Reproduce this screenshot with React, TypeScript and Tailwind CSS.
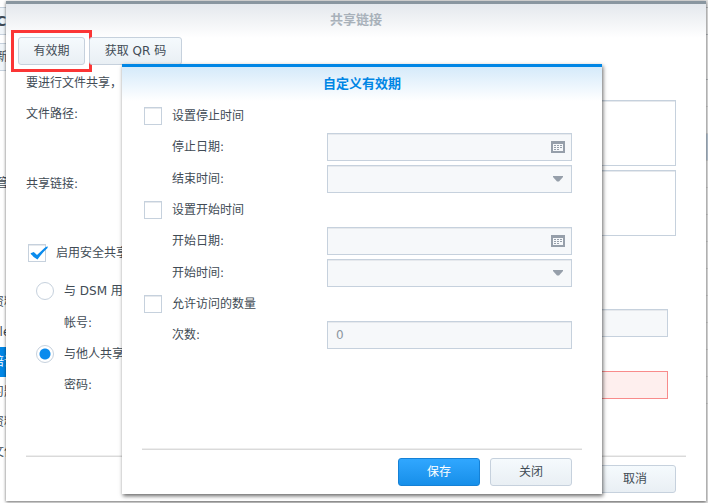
import { useState } from "react";
import type { ReactNode } from "react";

interface FolderRow {
  label: string;
  selected?: boolean;
}

const folders: FolderRow[] = [
  { label: "资料" },
  { label: "file" },
  { label: "培训", selected: true },
  { label: "习题" },
  { label: "资料" },
  { label: "文件" },
];

// rows of the file list, top to bottom; true marks the highlighted one
const listRows = [false, false, true, false, false, false, false, false, false, false, false, false];

const insetLine = "shadow-[inset_0_1px_0_#e6e9ed]";
const fieldBase = `block h-7 w-full border border-[#c6d1dd] bg-[#f6f8fa] px-2 text-[#8c969f] outline-none ${insetLine}`;
const buttonBase = "h-7 cursor-pointer rounded-[3px] border px-3";
const plainButton = `${buttonBase} border-[#c6d1dd] bg-linear-to-b from-[#f5fafd] to-[#e9eff4]`;
const footerLine = "border-t border-[#dadada] shadow-[0_-1px_0_#eeeeee]";

function CalendarIcon() {
  return (
    <svg width="14" height="12" viewBox="0 0 14 12" shapeRendering="crispEdges" aria-hidden="true">
      <rect width="14" height="12" rx="1" fill="#969faa" />
      <path d="M2 3h10v7H2z" fill="#f6f8fa" />
      <path d="M3 4h2v1H3zM6 4h2v1H6zM9 4h2v1H9zM3 6h2v1H3zM6 6h2v1H6zM9 6h2v1H9zM3 8h2v1H3zM6 8h2v1H6z" fill="#969faa" />
    </svg>
  );
}

function ArrowIcon() {
  return (
    <svg width="10" height="6" viewBox="0 0 10 6" aria-hidden="true">
      <path d="M0 0h10v1L6 5.500H4L0 1z" fill="#969faa" />
    </svg>
  );
}

function TickBox({ id, defaultChecked, label }: { id: string; defaultChecked?: boolean; label: string }) {
  return (
    <div className="flex h-[30px] items-center gap-[10px]">
      <span className="relative flex h-[18px] w-[18px] shrink-0">
        <input
          id={id}
          type="checkbox"
          defaultChecked={defaultChecked}
          className={`peer h-[18px] w-[18px] appearance-none border border-[#c6d1dd] bg-white ${insetLine}`}
        />
        <svg
          width="20"
          height="18"
          viewBox="0 0 20 18"
          className="pointer-events-none absolute top-0 left-px hidden peer-checked:block"
          aria-hidden="true"
        >
          <path d="M1.500 9.200L4.800 8L8 11L15.500 4Q17.500 2 18.800 2.500L18.500 4Q13 9 8.500 15.500Q4 13.500 1.500 9.200z" fill="#0a8bed" />
        </svg>
      </span>
      <label htmlFor={id}>{label}</label>
    </div>
  );
}

function Choice({ id, label, checked, onChange }: { id: string; label: string; checked: boolean; onChange: () => void }) {
  return (
    <div className="flex h-8 items-center gap-[10px] pl-2">
      <input
        id={id}
        type="radio"
        name="audience"
        checked={checked}
        onChange={onChange}
        className="h-[18px] w-[18px] shrink-0 appearance-none rounded-full border border-[#c6d1dd] bg-white checked:bg-[radial-gradient(circle,#0a8bed_5px,#fff_6px)]"
      />
      <label htmlFor={id}>{label}</label>
    </div>
  );
}

function FormRow({ id, label, icon, children }: { id: string; label: string; icon?: ReactNode; children: ReactNode }) {
  return (
    <div className="flex h-8 items-center pl-7">
      <label htmlFor={id} className="w-[155px] shrink-0">
        {label}
      </label>
      <div className="relative flex-1">
        {children}
        {icon && <span className="pointer-events-none absolute inset-y-0 right-0 flex w-7 items-center justify-center">{icon}</span>}
      </div>
    </div>
  );
}

function ValidityDialog() {
  return (
    <section
      role="dialog"
      aria-labelledby="validity-title"
      className="absolute top-[60px] bottom-[7px] left-[116px] flex w-[480px] flex-col border-t-[3px] border-[#0086e5] bg-white bg-linear-to-b from-[#d5eafa] to-white to-[34px] px-5 pb-2 shadow-[1px_2px_4px_rgba(0,0,0,0.6)]"
    >
      <h2 id="validity-title" className="h-[34px] text-center text-[13px] leading-[34px] font-bold text-[#0086e5]">
        自定义有效期
      </h2>
      <form className="flex flex-1 flex-col pr-[10px] pl-[2px]">
        <TickBox id="set-stop" label="设置停止时间" />
        <FormRow id="stop-date" label="停止日期:" icon={<CalendarIcon />}>
          <input id="stop-date" type="text" className={fieldBase} />
        </FormRow>
        <FormRow id="stop-time" label="结束时间:" icon={<ArrowIcon />}>
          <select id="stop-time" className={`${fieldBase} appearance-none`} />
        </FormRow>
        <TickBox id="set-start" label="设置开始时间" />
        <FormRow id="start-date" label="开始日期:" icon={<CalendarIcon />}>
          <input id="start-date" type="text" className={fieldBase} />
        </FormRow>
        <FormRow id="start-time" label="开始时间:" icon={<ArrowIcon />}>
          <select id="start-time" className={`${fieldBase} appearance-none`} />
        </FormRow>
        <TickBox id="set-count" label="允许访问的数量" />
        <FormRow id="count" label="次数:">
          <input id="count" type="text" defaultValue="0" className={fieldBase} />
        </FormRow>
      </form>
      <footer className={`flex justify-end gap-[10px] pt-2 pr-[10px] ${footerLine}`}>
        <button type="button" className={`${buttonBase} w-[82px] border-[#1581d6] bg-linear-to-b from-[#30a7ff] to-[#168fe9] text-white`}>
          保存
        </button>
        <button type="button" className={`${plainButton} w-[82px]`}>
          关闭
        </button>
      </footer>
    </section>
  );
}

function FileBrowser() {
  return (
    <div className="flex h-screen overflow-hidden bg-white whitespace-nowrap">
      <nav className="w-40 pt-[7px]">
        <div className="h-7 border-y border-[#c6d1dd] bg-[#f0f5f9] -indent-1 text-sm leading-[26px] font-bold">C</div>
        <div className="mt-2 h-7 border-y border-[#c6d1dd] bg-[#f0f5f9] -indent-1 leading-[26px]">新增</div>
        <div className="pt-[97px] pb-[89px] -indent-1 leading-[30px]">管理</div>
        <ul className="-indent-2">
          {folders.map((folder, idx) => (
            <li key={idx} className={folder.selected ? "h-[30px] bg-[#0086e5] leading-[30px] text-white" : "h-[30px] leading-[30px]"}>
              {folder.label}
            </li>
          ))}
        </ul>
      </nav>
      <div className="flex-1 bg-[#e4e4e4] pt-[7px]">
        <div className="h-7 border-y border-[#b4b8bc]" />
        <div className="h-[45px] border-b border-[#b4b8bc]" />
        {listRows.map((active, idx) => (
          <div key={idx} className={active ? "h-[27px] border-b border-[#cfcfcf] bg-[#b9c8d6]" : "h-[27px] border-b border-[#cfcfcf]"} />
        ))}
      </div>
    </div>
  );
}

export default function App() {
  const [audience, setAudience] = useState("others");

  return (
    <div className="relative h-screen min-h-[503px] overflow-hidden bg-[#dedede] font-['DejaVu_Sans','Noto_Sans_CJK_SC',sans-serif] text-xs text-[#414b55]">
      <FileBrowser />

      <main className="absolute top-px right-[2px] bottom-[2px] left-[6px] flex flex-col border-t-[3px] border-[#8996a0] bg-white bg-linear-to-b from-[#e4e8ed] to-white to-[34px] px-5 shadow-[0_1px_3px_rgba(0,0,0,0.6)]">
        <h1 className="h-[33px] text-center text-[13px] leading-8 font-bold text-[#a8b1ba]">共享链接</h1>
        <div className="-ml-2 flex h-7 gap-1">
          <div className="outline-3 outline-offset-4 outline-[#fb3535]">
            <button type="button" className={`${plainButton} w-[67px]`}>
              有效期
            </button>
          </div>
          <button type="button" className={`${plainButton} w-[93px]`}>
            获取 QR 码
          </button>
        </div>

        <p className="pt-2 leading-5">要进行文件共享，请将以下链接发送给收件人。</p>

        <div className="flex pt-[7px] pr-[10px]">
          <label htmlFor="path" className="w-[200px] shrink-0 leading-7">
            文件路径:
          </label>
          <textarea id="path" className={`h-[66px] flex-1 resize-none border border-[#c6d1dd] ${insetLine}`} />
        </div>
        <div className="flex pt-1 pr-[10px]">
          <label htmlFor="link" className="w-[200px] shrink-0 leading-7">
            共享链接:
          </label>
          <textarea id="link" className={`h-[66px] flex-1 resize-none border border-[#c6d1dd] ${insetLine}`} />
        </div>

        <div className="flex flex-1 flex-col pt-[2px] pr-[18px] pl-[2px]">
          <TickBox id="secure" defaultChecked label="启用安全共享" />
          <div className="pt-[7px]">
            <Choice id="dsm" label="与 DSM 用户共享" checked={audience === "dsm"} onChange={() => setAudience("dsm")} />
            <div className="flex h-[31px] items-center pl-9">
              <label htmlFor="account" className="w-[170px] shrink-0">
                帐号:
              </label>
              <input id="account" type="text" className={fieldBase} />
            </div>
            <Choice id="others" label="与他人共享" checked={audience === "others"} onChange={() => setAudience("others")} />
            <div className="flex h-[30px] items-center pl-9">
              <label htmlFor="password" className="w-[170px] shrink-0">
                密码:
              </label>
              <input id="password" type="password" className="h-7 w-full border border-[#f88b8b] bg-[#feefee] px-2 outline-none" />
            </div>
          </div>
        </div>

        <footer className={`flex justify-end pt-2 pr-[10px] pb-2 ${footerLine}`}>
          <button type="button" className={`${plainButton} w-[82px]`}>
            取消
          </button>
        </footer>

        <ValidityDialog />
      </main>
    </div>
  );
}
